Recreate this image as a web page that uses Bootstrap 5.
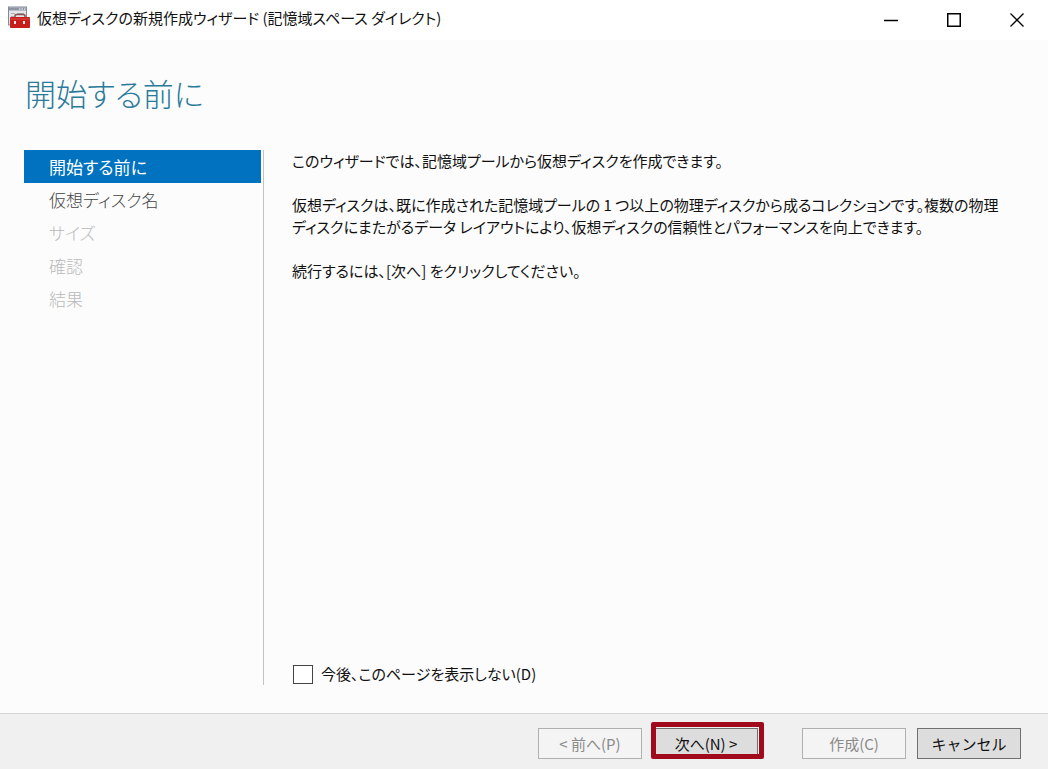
<!DOCTYPE html>
<html lang="ja">
<head>
<meta charset="utf-8">
<meta name="viewport" content="width=device-width, initial-scale=1">
<title>仮想ディスクの新規作成ウィザード</title>
<link href="https://cdn.jsdelivr.net/npm/bootstrap@5.3.0/dist/css/bootstrap.min.css" rel="stylesheet">
<style>
  body {
    font-family: "Noto Sans CJK JP", "Open Sans", sans-serif;
    font-feature-settings: "palt";
    font-size: 15px;
    line-height: 22px;
    color: #111;
    background: #fcfcfc;
  }
  .title-bar { height: 40px; background: #fff; padding: 0 0 4px 7px; }
  .title-bar h1 { font-size: 15px; line-height: 22px; font-weight: 400; }
  .app-icon { margin-right: 6px; }
  .win-btn { width: 63px; height: 36px; border: 0; background: transparent; padding: 0; }
  .page-title { font-size: 31px; line-height: 40px; font-weight: 300; color: #2a7a9b; padding: 33px 25px 0; }
  .wizard-body { padding: 37px 24px 28px; }
  .steps { width: 240px; border-right: 1px solid #c3c3c3; padding-right: 2px; }
  .step-link { height: 33px; line-height: 33px; padding-left: 25px; font-size: 17px; font-weight: 300; color: #444; text-decoration: none; }
  .step-link.active { background: #0072bf; color: #fff; font-weight: 400; }
  .step-link.disabled { color: #bababa; pointer-events: none; }
  .step-content { padding-left: 28px; }
  .step-content p { margin-bottom: 22px; }
  .form-check-input.skip-box { width: 20px; height: 19px; margin: 0 8px 0 1px; border: 1px solid #444; border-radius: 0; }
  .action-bar { height: 56px; background: #f0f0f0; border-top: 1px solid #d6d6d6; padding: 3px 27px 0 0; }
  .wiz-btn { width: 104px; height: 31px; padding: 0; border: 1px solid #707070; border-radius: 0; background: #ddd; color: #111; font-size: 15px; line-height: 29px; }
  .wiz-btn:disabled { background: #f4f4f4; border-color: #b0b0b0; color: #8a8a8a; opacity: 1; }
  .nav-pair { gap: 12px; margin-right: 44px; }
  .end-pair { gap: 11px; }
  .highlight::after { content: ""; position: absolute; inset: -6px -6px 0 -3px; border: 5px solid #a00a1c; border-radius: 2px; pointer-events: none; }
</style>
</head>
<body class="d-flex flex-column min-vh-100">
<header class="title-bar d-flex align-items-center">
  <svg width="24" height="24" viewBox="0 0 24 24" class="app-icon" aria-hidden="true">
    <rect x="1.5" y="1" width="18" height="18" fill="#e4e6ea" stroke="#858b95"/>
    <path d="M2 3h17" stroke="#8d95a2" stroke-width="3"/>
    <path d="M12 3h1.500M14.500 3H16M17 3h1.500" stroke="#fff"/>
    <path d="M4 7.500h4M10 7.500h7M4 10.500h3M4 13.500h2" stroke="#a8adb6"/>
    <path d="M8 12V10Q8 8.500 10 8.500h6q2 0 2 1.500V12" fill="none" stroke="#8b5050" stroke-width="1.500"/>
    <rect x="3" y="11" width="20" height="11" rx="1" fill="#c71e1c"/>
    <path d="M3 13h20" stroke="#df4a43"/>
    <path d="M8 15v3M17 15v3" stroke="#efe6e6" stroke-width="2"/>
  </svg>
  <h1 class="mb-0 text-nowrap">仮想ディスクの新規作成ウィザード (記憶域スペース ダイレクト)</h1>
  <div class="ms-auto d-flex">
    <button type="button" class="win-btn" aria-label="最小化"><svg width="14" height="14" viewBox="0 0 14 14"><path d="M0 7.500h14" stroke="#000" stroke-width="1.500"/></svg></button>
    <button type="button" class="win-btn" aria-label="最大化"><svg width="14" height="14" viewBox="0 0 14 14"><rect x=".75" y=".75" width="12.500" height="12.500" fill="none" stroke="#000" stroke-width="1.500"/></svg></button>
    <button type="button" class="win-btn" aria-label="閉じる"><svg width="14" height="14" viewBox="0 0 14 14"><path d="M.5.5l13 13M13.500.5l-13 13" stroke="#000" stroke-width="1.300"/></svg></button>
  </div>
</header>
<h2 class="page-title mb-0">開始する前に</h2>
<main class="wizard-body d-flex flex-grow-1">
  <nav class="steps flex-shrink-0 d-flex flex-column">
    <a href="#" class="step-link active" aria-current="step">開始する前に</a>
    <a href="#" class="step-link">仮想ディスク名</a>
    <a href="#" class="step-link disabled">サイズ</a>
    <a href="#" class="step-link disabled">確認</a>
    <a href="#" class="step-link disabled">結果</a>
  </nav>
  <section class="step-content flex-grow-1 d-flex flex-column">
    <p>このウィザードでは、記憶域プールから仮想ディスクを作成できます。</p>
    <p>仮想ディスクは、既に作成された記憶域プールの 1 つ以上の物理ディスクから成るコレクションです。複数の物理<br>ディスクにまたがるデータ レイアウトにより、仮想ディスクの信頼性とパフォーマンスを向上できます。</p>
    <p>続行するには、[次へ] をクリックしてください。</p>
    <div class="mt-auto d-flex align-items-center">
      <input class="form-check-input skip-box" type="checkbox" id="skip">
      <label for="skip">今後、このページを表示しない(D)</label>
    </div>
  </section>
</main>
<footer class="action-bar d-flex align-items-center justify-content-end">
  <div class="nav-pair d-flex">
    <button type="button" class="btn wiz-btn" disabled>&lt; 前へ(P)</button>
    <div class="highlight position-relative"><button type="button" class="btn wiz-btn d-block">次へ(N) &gt;</button></div>
  </div>
  <div class="end-pair d-flex">
    <button type="button" class="btn wiz-btn" disabled>作成(C)</button>
    <button type="button" class="btn wiz-btn">キャンセル</button>
  </div>
</footer>
<script src="https://cdn.jsdelivr.net/npm/bootstrap@5.3.0/dist/js/bootstrap.bundle.min.js"></script>
</body>
</html>
